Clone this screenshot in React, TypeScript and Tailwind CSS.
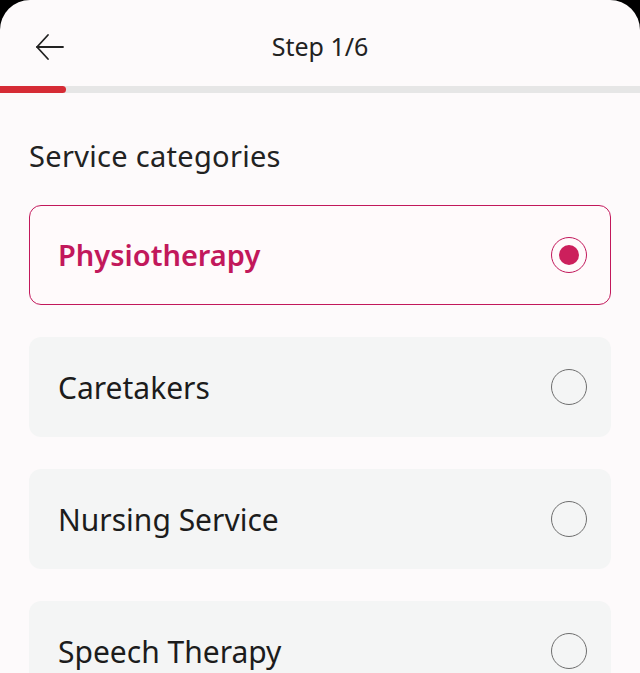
import React, { useState } from "react";

const categories = ["Physiotherapy", "Caretakers", "Nursing Service", "Speech Therapy"];

const App: React.FC = () => {
  const [selected, setSelected] = useState("Physiotherapy");

  return (
    <div className="bg-black w-[640px] h-[673px] overflow-hidden">
      <div
        className="bg-[#fdfafb] h-full rounded-t-[30px] overflow-hidden"
        style={{ fontFamily: "'Noto Sans', sans-serif" }}
      >
        {/* Header */}
        <div className="relative h-[86px] flex items-center justify-center">
          <button className="absolute left-[34px] top-[32px] text-[#222]" aria-label="Back">
            <svg width="32" height="30" viewBox="0 0 32 30" fill="none" stroke="currentColor" strokeWidth="1.8" strokeLinecap="round" strokeLinejoin="round">
              <path d="M29 15H3" />
              <path d="M14 3L3 15l11 12" />
            </svg>
          </button>
          <span className="text-[25px] text-[#222] leading-none mt-[6px]">Step 1/6</span>
        </div>

        {/* Progress */}
        <div className="h-[7px] bg-[#e6e6e6]">
          <div className="h-full w-[66px] bg-[#d62b35] rounded-r-full" />
        </div>

        <div className="px-[29px]">
          <h1 className="text-[29px] tracking-[0.3px] text-[#222] mt-[47px] leading-[32px]">Service categories</h1>

          <div className="mt-[33px] flex flex-col gap-[32px]">
            {categories.map((c) => {
              const active = c === selected;
              return (
                <button
                  key={c}
                  onClick={() => setSelected(c)}
                  className={
                    active
                      ? "h-[100px] rounded-[12px] border-[1.5px] border-[#c2185b] bg-[#fffafb] flex items-center justify-between pl-[28px] pr-[23px]"
                      : "h-[100px] rounded-[12px] bg-[#f4f5f5] flex items-center justify-between pl-[29px] pr-[24px]"
                  }
                >
                  <span
                    className={
                      active
                        ? "text-[29px] font-semibold text-[#c2185b]"
                        : "text-[30px] text-[#1c1c1c]"
                    }
                  >
                    {c}
                  </span>
                  {active ? (
                    <span className="w-[36px] h-[36px] rounded-full border-[1.5px] border-[#c2185b] flex items-center justify-center">
                      <span className="w-[20px] h-[20px] rounded-full bg-[#cc1f5c]" />
                    </span>
                  ) : (
                    <span className="w-[36px] h-[36px] rounded-full border-[1.5px] border-[#6e6e6e]" />
                  )}
                </button>
              );
            })}
          </div>
        </div>
      </div>
    </div>
  );
};

export default App;
